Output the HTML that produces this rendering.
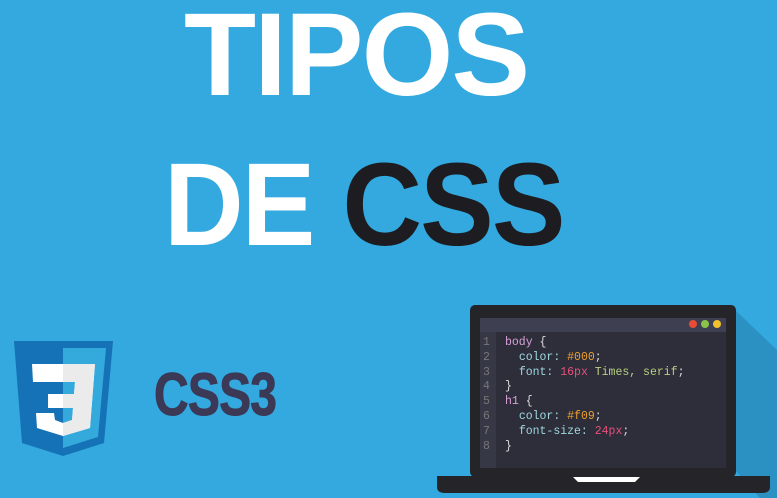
<!DOCTYPE html><html><head><style>
body{margin:0;width:777px;height:498px;overflow:hidden;background:#33a9df;position:relative;font-family:"Liberation Sans",sans-serif}
.t{position:absolute;font-weight:bold;font-size:118px;line-height:1;letter-spacing:-2px;white-space:nowrap}
pre{margin:0;font-family:"Liberation Mono",monospace;font-size:11.5px;line-height:14.8px;color:#ddd}
</style></head><body>
<div class="t" style="left:184px;top:-4px;color:#fff">TIPOS</div>
<div class="t" style="left:164px;top:146px;color:#fff;transform:scaleX(0.935);transform-origin:left">DE <span style="color:#1d1d21">CSS</span></div>
<svg style="position:absolute;left:0;top:0" width="777" height="498">
<polygon points="735,310 777,350 777,498 760,498 735,470" fill="#2b90c2"/>
<polygon points="14,341 113,341 104,443 63,456 22,443" fill="#1572b6"/>
<polygon points="63,348 106,348 98,437 63,448" fill="#33a9dc"/>
<polygon points="32,364 95,364 90,428 63,436 37,428 36,413 54,413 55,420 63,423 72,420 73,408 48,408 48,394 74,394 75,382 33,382" fill="#fff"/>
<polygon points="63,364 95,364 90,428 63,436 63,423 72,420 73,408 63,408 63,394 74,394 75,382 63,382" fill="#ebebeb"/>
<rect x="470" y="305" width="266" height="172" rx="5" fill="#252529"/>
<rect x="480" y="318" width="246" height="150" fill="#2d2e3a"/>
<rect x="480" y="318" width="246" height="14" fill="#3e4052"/>
<rect x="480" y="332" width="16" height="136" fill="#363846"/>
<circle cx="693" cy="324" r="4" fill="#e94b35"/><circle cx="705" cy="324" r="4" fill="#8bc34a"/><circle cx="717" cy="324" r="4" fill="#f2c12e"/>
<path d="M437,476 H770 V487 Q770,493 762,493 H445 Q437,493 437,487 Z" fill="#252529"/>
<path d="M573,477 H640 L635,482 H578 Z" fill="#fff"/>
</svg>
<pre style="position:absolute;left:483px;top:336px;color:#777">1
2
3
4
5
6
7
8</pre>
<pre style="position:absolute;left:505px;top:336px"><span style="color:#d8a0d8">body</span> {
  <span style="color:#9fd8e0">color:</span> <span style="color:#f0a030">#000</span>;
  <span style="color:#9fd8e0">font:</span> <span style="color:#e8507a">16px</span> <span style="color:#b8d080">Times, serif</span>;
}
<span style="color:#d8a0d8">h1</span> {
  <span style="color:#9fd8e0">color:</span> <span style="color:#f0a030">#f09</span>;
  <span style="color:#9fd8e0">font-size:</span> <span style="color:#e8507a">24px</span>;
}</pre>
<div style="position:absolute;left:154px;top:360px;font-size:60px;font-weight:bold;color:#3b3956;letter-spacing:-1px;transform:scaleX(0.8);transform-origin:left;-webkit-text-stroke:1px #3b3956">CSS3</div>
</body></html>
